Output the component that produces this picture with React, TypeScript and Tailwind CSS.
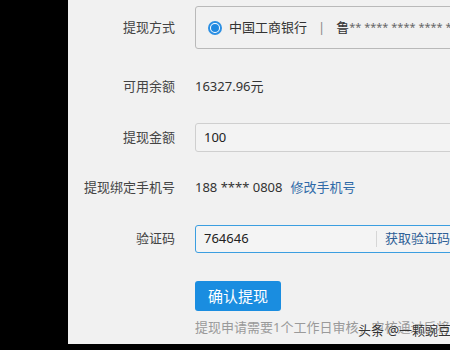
import React from 'react';

const font = "font-['Noto_Sans','Noto_Sans_CJK_SC',sans-serif]";

function Row({ label, className, children }: { label: string; className: string; children: React.ReactNode }) {
  return (
    <div className={`flex items-center shrink-0 ${className}`}>
      <div className="w-[107px] shrink-0 text-right text-[13px] text-[#444]">{label}</div>
      <div className="ml-[20px] flex items-center h-full">{children}</div>
    </div>
  );
}

export default function App() {
  return (
    <div className={`w-[450px] h-[350px] bg-black flex ${font}`}>
      <div className="w-[68px] shrink-0" />
      <div className="relative w-[382px] h-[344px] bg-[#f1f1f1] overflow-hidden flex flex-col pt-[6px]">
        {/* 提现方式 */}
        <Row label="提现方式" className="h-[43px]">
          <div className="w-[300px] h-[43px] shrink-0 border border-[#b9b9b9] rounded-[3px] flex items-center pl-[12px] whitespace-nowrap">
            <span className="w-[14px] h-[14px] rounded-full border-2 border-[#2b8fe3] bg-white flex items-center justify-center">
              <span className="w-[8px] h-[8px] rounded-full bg-[#1f88e0]" />
            </span>
            <span className="ml-[7px] text-[13px] text-[#333]">中国工商银行</span>
            <span className="mx-[11px] text-[13px] text-[#888]">|</span>
            <span className="text-[13px] text-[#333]">鲁</span>
            <span className="text-[11px] text-[#666]">** **** **** **** ***<span className="text-[#e07b2a]">4</span>289</span>
          </div>
        </Row>

        {/* 可用余额 */}
        <Row label="可用余额" className="h-[30px] mt-[23px]">
          <span className="text-[13px] text-[#333]">16327.96元</span>
        </Row>

        {/* 提现金额 */}
        <Row label="提现金额" className="h-[29px] mt-[21px]">
          <div className="w-[300px] h-[29px] shrink-0 border border-[#cfcfcf] rounded-[3px] bg-[#f3f3f3] flex items-center pl-[8px] text-[13px] text-[#222]">
            100
          </div>
        </Row>

        {/* 手机号 */}
        <Row label="提现绑定手机号" className="h-[30px] mt-[21px]">
          <span className="text-[13px] text-[#333] whitespace-nowrap">188 **** 0808</span>
          <span className="ml-[8px] text-[13px] text-[#2f6aa8] whitespace-nowrap">修改手机号</span>
        </Row>

        {/* 验证码 */}
        <Row label="验证码" className="h-[28px] mt-[22px]">
          <div className="w-[300px] h-[28px] shrink-0 border border-[#3b9ee0] rounded-[3px] bg-[#f4f4f4] flex items-center whitespace-nowrap">
            <span className="w-[180px] pl-[8px] text-[13px] text-[#222]">764646</span>
            <span className="w-px h-[16px] bg-[#d6d6d6]" />
            <span className="ml-[8px] text-[13px] text-[#2f5f96]">获取验证码</span>
          </div>
        </Row>

        {/* 按钮 */}
        <div className="flex shrink-0 mt-[28px] pl-[127px]">
          <button className="w-[86px] h-[30px] rounded-[3px] bg-[#1a8de0] text-white text-[15px]">确认提现</button>
        </div>

        {/* 提示 */}
        <div className="shrink-0 mt-[7px] h-[20px] pl-[127px] flex items-center text-[13px] text-[#9a9a9a] whitespace-nowrap">
          提现申请需要1个工作日审核，审核通过后将为您打款
        </div>

        {/* 水印 */}
        <div className="absolute left-[290px] top-[321px] text-[13px] text-[#333] whitespace-nowrap [text-shadow:0_0_2px_#fff]">
          头条 @一颗豌豆
        </div>
      </div>
    </div>
  );
}
